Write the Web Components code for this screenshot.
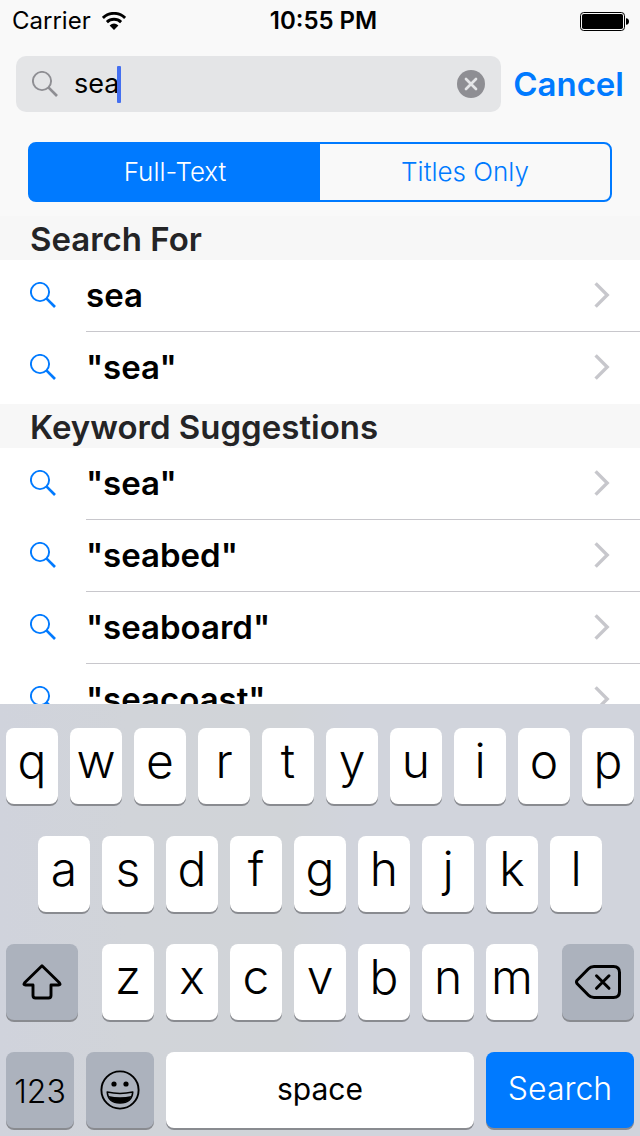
<!DOCTYPE html>
<html lang="en">
<head>
<meta charset="utf-8">
<meta name="viewport" content="width=device-width, initial-scale=1">
<title>Search</title>
<style>
html, body { margin: 0; height: 100%; }
body { font-family: Inter, "Liberation Sans", sans-serif; color: #000; background: #fff; }
</style>
</head>
<body>
<search-app></search-app>
<script>
const define = (name, html, setup) => {
  const tpl = document.createElement('template');
  tpl.innerHTML = html;
  customElements.define(name, class extends HTMLElement {
    constructor() {
      super();
      this.attachShadow({ mode: 'open' }).append(tpl.content.cloneNode(true));
    }
    connectedCallback() { if (setup) setup(this, this.shadowRoot); }
  });
};

define('glass-icon', `
<style>
:host { display: block; width: 26px; height: 26px; flex: none; }
svg { display: block; }
</style>
<svg width="26" height="26" viewBox="0 0 26 26" fill="none" stroke="currentColor" aria-hidden="true">
  <circle cx="10" cy="10" r="9.1" stroke-width="1.9"/>
  <path d="M16.4 16.4L25 25" stroke-width="2.7"/>
</svg>`);

define('status-bar', `
<style>
:host { display: grid; grid-template-columns: 1fr auto 1fr; align-items: center; height: 40px; padding: 0 11px 0 12px; font-size: 24px; line-height: 42px; }
.left { display: flex; align-items: center; gap: 11px; }
.time { font-weight: 600; padding-left: 6px; }
.right { display: flex; justify-content: flex-end; }
svg { display: block; }
</style>
<div class="left"><span>Carrier</span>
  <svg width="24" height="18" viewBox="0 0 24 18" fill="none" stroke="#000" stroke-width="2.9" aria-hidden="true">
    <path d="M.9 5.9A15.8 15.8 0 0 1 23.1 5.9"/>
    <path d="M4.9 10.1A10.2 10.2 0 0 1 19.1 10.1"/>
    <path d="M12 18L7.6 13.5Q12 9.6 16.4 13.5Z" fill="#000" stroke="none"/>
  </svg>
</div>
<div class="time">10:55 PM</div>
<div class="right">
  <svg width="49" height="19" viewBox="0 0 49 19" aria-hidden="true">
    <rect x=".5" y=".5" width="44" height="18" rx="3.2" fill="none" stroke="#000"/>
    <rect x="2" y="2" width="41" height="15" rx="1.8"/>
    <path d="M46 6.2C48.2 6.4 49 7.6 49 9.5S48.2 12.6 46 12.8Z"/>
  </svg>
</div>`);

define('search-field', `
<style>
:host { display: flex; align-items: center; gap: 12px; padding: 16px; padding-bottom: 30px; }
.field { flex: 1; min-width: 0; height: 56px; box-sizing: border-box; border-radius: 10px; background: #e4e5e7; display: flex; align-items: center; padding: 0 16px; }
glass-icon { color: #8e8e93; margin-right: 16px; }
.entry { flex: 1; min-width: 0; display: flex; align-items: center; }
input { field-sizing: content; max-width: 100%; height: 40px; margin: 0; padding: 0; border: 0; background: none; outline: none; font: 400 27px/40px Inter, "Liberation Sans", sans-serif; color: #000; }
.caret { width: 4px; height: 37px; border-radius: 1px; background: #446ff0; margin-left: -2px; flex: none; }
button { border: 0; padding: 0; margin: 0; background: none; cursor: pointer; }
svg { display: block; }
.cancel { color: #007aff; font: 600 33px/56px Inter, "Liberation Sans", sans-serif; }
</style>
<label class="field">
  <glass-icon></glass-icon>
  <span class="entry"><input type="text" value="sea" aria-label="Search"><span class="caret"></span></span>
  <button type="button" aria-label="Clear text">
    <svg width="28" height="28" viewBox="0 0 28 28"><circle cx="14" cy="14" r="14" fill="#8e8e93"/><path d="M9 9L19 19M19 9L9 19" stroke="#e4e5e7" stroke-width="2.7" stroke-linecap="round"/></svg>
  </button>
</label>
<button type="button" class="cancel">Cancel</button>`);

define('scope-switch', `
<style>
:host { display: block; padding: 0 28px 14px; }
.group { display: grid; grid-template-columns: 1fr 1fr; height: 60px; box-sizing: border-box; border: 2px solid #007aff; border-radius: 8px; overflow: hidden; background: linear-gradient(90deg, #007aff 50%, transparent 50%) border-box; }
button { border: 0; margin: 0; padding: 0; background: none; color: #007aff; font: 300 26px/56px Inter, "Liberation Sans", sans-serif; cursor: pointer; }
button[aria-pressed="true"] { color: #fff; }
</style>
<div class="group" role="group" aria-label="Search scope">
  <button type="button" aria-pressed="true">Full-Text</button>
  <button type="button" aria-pressed="false">Titles Only</button>
</div>`);

define('result-section', `
<style>
:host { display: block; }
h2 { margin: 0; padding: 0 30px; height: 44px; background: #f7f7f7; color: #242426; font-size: 33px; font-weight: 600; line-height: 46px; white-space: nowrap; }
</style>
<h2></h2>
<div role="list"><slot></slot></div>`, (host, root) => {
  root.querySelector('h2').textContent = host.getAttribute('heading');
});

define('result-row', `
<style>
:host { display: block; }
a { display: flex; align-items: stretch; height: 72px; padding-left: 30px; color: #000; text-decoration: none; }
glass-icon { color: #007aff; margin: 22px 30px 0 0; }
.body { flex: 1; min-width: 0; box-sizing: border-box; display: flex; align-items: flex-start; padding-right: 30px; border-bottom: 1px solid #c8c7cc; }
:host([last]) .body { border-color: transparent; }
.text { flex: 1; font-size: 33px; font-weight: 600; line-height: 71px; white-space: nowrap; }
svg { display: block; margin-top: 22px; }
</style>
<a href="#" role="listitem"><glass-icon></glass-icon>
  <span class="body"><span class="text"><slot></slot></span>
    <svg width="16" height="26" viewBox="0 0 16 26" fill="none" stroke="#c7c7cc" stroke-width="3.4" aria-hidden="true"><path d="M1.6 1.4L13.2 13L1.6 24.6"/></svg>
  </span>
</a>`);

define('key-cap', `
<style>
:host { display: block; min-width: 0; }
button { display: flex; align-items: center; justify-content: center; width: 100%; height: 76px; margin: 0; padding: 0 0 10px; border: 0; border-radius: 8px; background: #fff; box-shadow: 0 2px 0 #898b90; color: #000; font: 300 48px/66px Inter, "Liberation Sans", sans-serif; cursor: pointer; }
:host([kind]) button { padding: 0; font-weight: 400; }
:host([kind="space"]) button { font-size: 30px; padding-bottom: 2px; }
:host([kind="dark"]) button { background: #acb2bd; font-size: 32px; font-weight: 300; padding-top: 3px; }
:host([kind="icon"]) button { background: #acb2bd; }
:host([kind="action"]) button { background: #007aff; color: #fff; font-size: 32px; font-weight: 300; padding-bottom: 2px; }
</style>
<button type="button"><slot></slot></button>`, (host, root) => {
  if (host.title) root.querySelector('button').setAttribute('aria-label', host.title);
});

define('touch-keyboard', `
<style>
:host { display: flex; flex-direction: column; gap: 32px; flex: none; padding: 24px 6px 8px; background: linear-gradient(90deg, #d0d3dc 0, #d1d4d9 20%, #d1d4d8 45%, #d1d4dc 55%, #d1d4dc 100%); }
.row { display: grid; grid-template-columns: repeat(20, minmax(0, 1fr)); column-gap: 12px; }
.row key-cap { grid-column-end: span 2; }
.home key-cap:first-child { grid-column: 2 / span 2; }
.row key-cap.shift { grid-column: 1 / span 3; margin-right: 12px; }
.row key-cap.delete { grid-column: 18 / span 3; margin-left: 12px; }
.bottom { display: flex; gap: 12px; }
.narrow { flex: 17 1 0; }
.wide { flex: 77 1 0; }
.go { flex: 37 1 0; }
svg { display: block; }
</style>
<div class="row top"></div>
<div class="row home"></div>
<div class="row lower">
  <key-cap kind="icon" class="shift" title="Shift"><svg width="40" height="36" viewBox="0 0 40 36" fill="none" stroke="#000" stroke-width="2.9" stroke-linejoin="round"><path d="M20 1.8L37.4 18.8Q39 21 36.5 21H29V31.5Q29 34 26.500 34H13.500Q11 34 11 31.500V21H3.500Q1 21 2.600 18.800Z"/></svg></key-cap>
  <key-cap kind="icon" class="delete" title="Delete"><svg width="46" height="34" viewBox="0 0 46 34" fill="none" stroke="#000" stroke-width="3" stroke-linejoin="round" stroke-linecap="round"><path d="M2.200 15.200L13.500 3.800Q15.600 1.500 19 1.500H38.500Q44.500 1.500 44.500 7.500V26.500Q44.500 32.500 38.500 32.500H19Q15.600 32.500 13.500 30.200L2.200 18.800Q.8 17 2.200 15.200Z"/><path d="M21.500 10.800L34 23.300M34 10.800L21.500 23.300"/></svg></key-cap>
</div>
<div class="bottom">
  <key-cap kind="dark" class="narrow">123</key-cap>
  <key-cap kind="icon" class="narrow" title="Emoji"><svg width="40" height="40" viewBox="0 0 40 40"><circle cx="20" cy="20" r="18.600" fill="none" stroke="#000" stroke-width="1.900"/><circle cx="14" cy="14" r="2.600"/><circle cx="26" cy="14" r="2.600"/><path d="M7.200 22Q20 24.800 32.800 22Q32 33 20 33T7.200 22Z" fill="none" stroke="#000" stroke-width="1.500" stroke-linejoin="round"/><path d="M8.500 26Q20 28.600 31.500 26Q28.800 33 20 33T8.500 26Z"/></svg></key-cap>
  <key-cap kind="space" class="wide">space</key-cap>
  <key-cap kind="action" class="go">Search</key-cap>
</div>`, (host, root) => {
  const keys = letters => [...letters].map(ch => {
    const key = document.createElement('key-cap');
    key.textContent = ch;
    return key;
  });
  root.querySelector('.top').append(...keys('qwertyuiop'));
  root.querySelector('.home').append(...keys('asdfghjkl'));
  root.querySelector('.shift').after(...keys('zxcvbnm'));
});

define('search-app', `
<style>
:host { display: flex; flex-direction: column; height: 100vh; overflow: hidden; }
header { flex: none; background: #f9f9f9; }
main { flex: 1 1 0; min-height: 0; overflow: hidden; background: #fff; }
</style>
<header>
  <status-bar></status-bar>
  <search-field></search-field>
  <scope-switch></scope-switch>
</header>
<main>
  <result-section heading="Search For">
    <result-row>sea</result-row>
    <result-row last>"sea"</result-row>
  </result-section>
  <result-section heading="Keyword Suggestions">
    <result-row>"sea"</result-row>
    <result-row>"seabed"</result-row>
    <result-row>"seaboard"</result-row>
    <result-row>"seacoast"</result-row>
  </result-section>
</main>
<touch-keyboard></touch-keyboard>`);
</script>
</body>
</html>
